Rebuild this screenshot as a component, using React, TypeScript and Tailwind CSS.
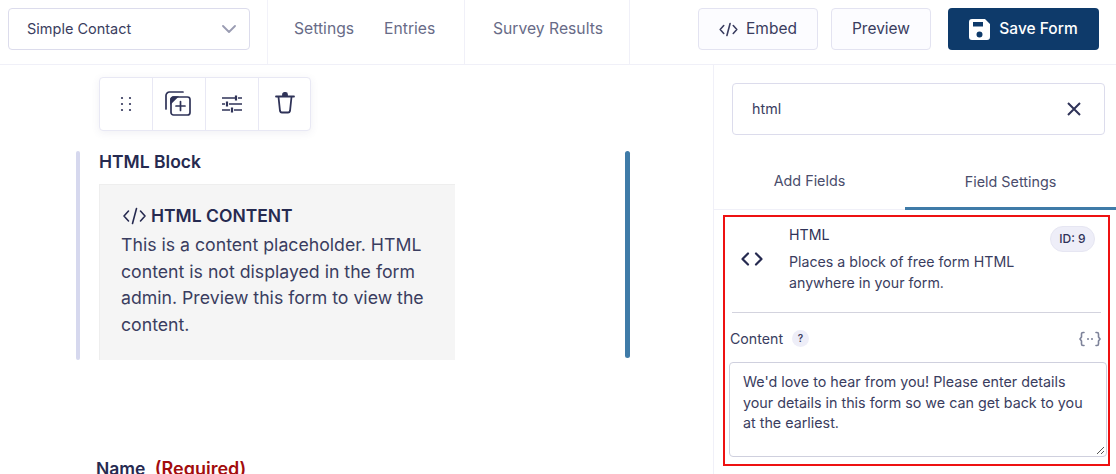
import React from "react";

const Code = ({ className }: { className?: string }) => (
  <svg viewBox="0 0 24 18" className={className} fill="none" stroke="currentColor" strokeWidth="2" strokeLinecap="round" strokeLinejoin="round">
    <path d="M6 4 1.500 9 6 14M18 4l4.500 5-4.500 5M14 1.500 10 16.500" />
  </svg>
);

export default function App() {
  return (
    <div className="w-[1116px] h-[474px] overflow-hidden bg-white flex flex-col text-[#2f3358] font-['Inter',sans-serif]">
      <header className="h-[65px] shrink-0 flex border-b border-[#f0f0f8]">
        <div className="w-[268px] shrink-0 pl-2 pt-2 border-r border-[#f2f2f9]">
          <div className="w-[242px] h-[42px] rounded border border-[#dcdcec] flex items-center justify-between pl-[18px] pr-[13px] text-[14.500px] text-[#3a3d60]">
            <span>Simple Contact</span>
            <svg viewBox="0 0 14 8" className="w-[14px] h-[8px] text-[#9a9cb2]" fill="none" stroke="currentColor" strokeWidth="1.800" strokeLinecap="round" strokeLinejoin="round"><path d="M1 1l6 6 6-6" /></svg>
          </div>
        </div>
        <nav className="w-[197px] shrink-0 border-r border-[#f0f0f8] flex items-center pl-[26px] gap-[30px] text-[15.700px] text-[#686b87] pb-[6px]">
          <span>Settings</span>
          <span>Entries</span>
        </nav>
        <nav className="w-[165px] shrink-0 border-r border-[#f0f0f8] flex items-center pl-[28px] text-[15.700px] text-[#686b87] pb-[6px]">
          <span>Survey Results</span>
        </nav>
        <div className="flex-1 pl-[68px] pt-2 flex items-start text-[15.500px] text-[#3a3d60]">
          <button className="w-[120px] h-[42px] rounded border border-[#e3e3f1] bg-[#fcfcff] flex items-center justify-center gap-2">
            <Code className="w-[19px] h-[15px]" /> Embed
          </button>
          <button className="ml-[13px] w-[100px] h-[42px] rounded border border-[#e3e3f1] bg-[#fcfcff] flex items-center justify-center">Preview</button>
          <button className="ml-[17px] w-[151px] h-[42px] rounded bg-[#0e3a6a] text-white flex items-center justify-center gap-[9px] font-medium">
            <svg viewBox="0 0 21 21" className="w-[21px] h-[21px]"><path fill="currentColor" fillRule="evenodd" d="M3 0h13l5 5v13a3 3 0 0 1-3 3H3a3 3 0 0 1-3-3V3a3 3 0 0 1 3-3Zm1 3v4.500h10V3H4Zm6.500 9.500a3 3 0 1 0 0 6 3 3 0 0 0 0-6Z" /></svg>
            Save Form
          </button>
        </div>
      </header>

      <div className="flex flex-1 min-h-0">
        <main className="w-[713px] shrink-0 pl-[76px] pr-[83px]">
          <div className="ml-[23px] mt-3 w-[212px] h-[54px] rounded border border-[#e8e8f4] shadow-[0_2px_8px_rgba(60,60,120,0.08)] flex text-[#2f3358] bg-white">
            <div className="w-[53px] flex items-center justify-center border-r border-[#e8e8f4]">
              <svg viewBox="0 0 12 16" className="w-[12px] h-[16px]" fill="currentColor">
                <circle cx="2" cy="2" r="1.100" /><circle cx="10" cy="2" r="1.100" /><circle cx="2" cy="8" r="1.100" /><circle cx="10" cy="8" r="1.100" /><circle cx="2" cy="14" r="1.100" /><circle cx="10" cy="14" r="1.100" />
              </svg>
            </div>
            <div className="w-[53px] flex items-center justify-center border-r border-[#e8e8f4]">
              <svg viewBox="0 0 26 25" className="w-[26px] h-[25px] -mt-[1px] -ml-[2px]" fill="none" stroke="currentColor" strokeWidth="1.700" strokeLinecap="round">
                <path d="M18 1H4.500A3.500 3.500 0 0 0 1 4.500V18" />
                <rect x="6" y="6" width="19" height="18" rx="2.500" />
                <path d="M6 12V8.500A2.500 2.500 0 0 1 8.500 6H12Z" fill="currentColor" />
                <path d="M15.500 10.500v9M11 15h9" />
              </svg>
            </div>
            <div className="w-[53px] flex items-center justify-center border-r border-[#e8e8f4]">
              <svg viewBox="0 0 20 18" className="w-[20px] h-[18px] -mt-[1px]" fill="none" stroke="currentColor" strokeWidth="1.700">
                <path d="M0 3h13M16 3h4M0 9h3M7 9h13M0 15h8M12 15h8" />
                <path d="M14 0.500v5M5 6.500v5M10 12.500v5" strokeWidth="2.200" />
              </svg>
            </div>
            <div className="flex-1 flex items-center justify-center">
              <svg viewBox="0 0 20 22" className="w-[20px] h-[22px] -mt-[3px]" fill="none" stroke="currentColor" strokeWidth="1.800" strokeLinejoin="round">
                <path d="M1 4.500h18" strokeLinecap="round" />
                <path d="M8 4V2.500a1.500 1.500 0 0 1 1.500-1.500h1A1.500 1.500 0 0 1 12 2.500V4Z" fill="currentColor" />
                <path d="M3.500 5 5 19a2 2 0 0 0 2 1.500h6a2 2 0 0 0 2-1.500l1.500-14" />
              </svg>
            </div>
          </div>

          <section className="mt-[20px] h-[209px] flex justify-between">
            <div className="flex">
              <div className="w-[4px] rounded-sm bg-[#d6d8ee]" />
              <div className="ml-[19px]">
                <h2 className="text-[17.500px] leading-[22px] font-semibold text-[#262a50]">HTML Block</h2>
                <div className="mt-[11px] w-[356px] h-[176px] bg-[#f5f5f5] border-t border-l border-[#eeeeee] pl-[22px] pr-[20px] pt-[20px]">
                  <div className="flex items-center gap-[4px] text-[17.500px] leading-[22px] font-semibold text-[#262a50]">
                    <Code className="w-[25px] h-[18px] [&_path]:[stroke-width:1.600]" />
                    <span>HTML CONTENT</span>
                  </div>
                  <p className="text-[17.700px] leading-[26.500px] text-[#3a3d60] mt-[5px] -ml-px">This is a content placeholder. HTML content is not displayed in the form admin. Preview this form to view the content.</p>
                </div>
              </div>
            </div>
            <div className="w-[5px] h-[207px] rounded-sm bg-[#3f7ba8]" />
          </section>

          <div className="mt-[98px] -ml-px pl-[21px] text-[17.500px] leading-[22px] font-semibold whitespace-nowrap text-[#262a50]">
            Name <span className="ml-[5px] text-[18px] text-[#a30d0d]">(Required)</span>
          </div>
        </main>

        <aside className="flex-1 border-l border-[#f0f0f8] flex flex-col min-w-0">
          <div className="pl-[18px] pt-[18px]">
            <div className="w-[373px] h-[52px] rounded border border-[#dcdcec] flex items-center justify-between pl-[19px] pr-[23px] text-[14.300px] text-[#3a3d60]">
              <span>html</span>
              <svg viewBox="0 0 14 14" className="w-[14px] h-[14px] text-[#2f3358]" fill="none" stroke="currentColor" strokeWidth="2"><path d="M1 1l12 12M13 1 1 13" /></svg>
            </div>
          </div>
          <div className="mt-[24px] h-[51px] flex border-b border-[#f0f0f8] text-[14.350px] text-[#4a4d6c]">
            <div className="w-[191px] flex items-center justify-center pb-[6px]">Add Fields</div>
            <div className="flex-1 flex items-center justify-center pb-[3px] border-b-[3px] border-[#3f7ba8] -mb-px">Field Settings</div>
          </div>
          <div className="ml-[9px] mt-[5px] w-[387px] h-[251px] border-2 border-[#ee1111] px-[5px]">
            <div className="relative h-[96px] border-b border-[#d3d3de] mx-[2px] flex">
              <div className="w-[57px] shrink-0 pt-[35px] pl-[9px]">
                <svg viewBox="0 0 22 14" className="w-[22px] h-[14px] text-[#262a50]" fill="none" stroke="currentColor" strokeWidth="2.200" strokeLinecap="round" strokeLinejoin="round"><path d="M7 1.500 1.500 7 7 12.500M15 1.500 20.500 7 15 12.500" /></svg>
              </div>
              <div className="text-[14.200px] text-[#3a3d60] pt-[8px]">
                <div className="leading-[20px] text-[#2f3358]">HTML</div>
                <p className="mt-[7px] leading-[20.500px] w-[260px]">Places a block of free form HTML anywhere in your form.</p>
              </div>
              <span className="absolute right-[6px] top-[9px] w-[45px] h-[26px] rounded-full bg-[#eeeef8] border border-[#e6e6f2] flex items-center justify-center text-[12px] font-medium text-[#2f3358]">ID: 9</span>
            </div>
            <div className="flex items-center h-[49px] pt-[2px] text-[14.200px] text-[#3a3d60]">
              <span>Content</span>
              <span className="ml-[9px] w-[17px] h-[17px] rounded-full bg-[#eeeef8] flex items-center justify-center text-[10px] font-semibold">?</span>
              <svg viewBox="0 0 22 16" className="ml-auto mr-[2px] w-[22px] h-[16px] text-[#7d8299]" fill="none" stroke="currentColor" strokeWidth="1.600" strokeLinecap="round">
                <path d="M5 1.500H4a1.500 1.500 0 0 0-1.500 1.500v3L1 8l1.500 2v3A1.500 1.500 0 0 0 4 14.500h1M17 1.500h1A1.500 1.500 0 0 1 19.500 3v3L21 8l-1.500 2v3a1.500 1.500 0 0 1-1.500 1.500h-1" />
                <path d="M9 8h.01M13 8h.01" strokeWidth="2" />
              </svg>
            </div>
            <div className="relative h-[95px] w-[378px] -ml-px rounded border border-[#cfd0de] pl-[13px] pr-[20px] pt-[9px] text-[14.300px] leading-[20.500px] text-[#3a3d60]">
              We'd love to hear from you! Please enter details your details in this form so we can get back to you at the earliest.
              <svg viewBox="0 0 9 9" className="absolute right-px bottom-px w-[9px] h-[9px] text-[#555]" fill="none" stroke="currentColor" strokeWidth="1"><path d="M1 8 8 1M5 8l3-3" /></svg>
            </div>
          </div>
        </aside>
      </div>
    </div>
  );
}
